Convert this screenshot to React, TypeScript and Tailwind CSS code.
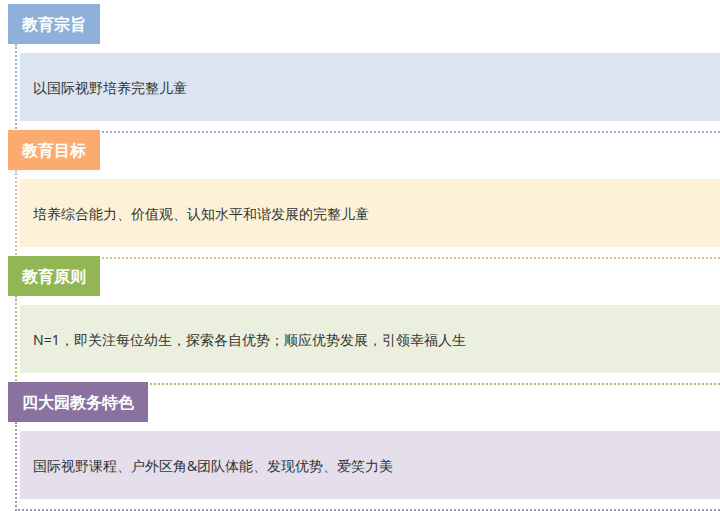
const sections = [
  { title: "教育宗旨", text: "以国际视野培养完整儿童", head: "bg-[#8eb0da]", body: "bg-[#dbe4f0]", line: "border-[#8eb0da]" },
  { title: "教育目标", text: "培养综合能力、价值观、认知水平和谐发展的完整儿童", head: "bg-[#fbab6d]", body: "bg-[#fdf1d7]", line: "border-[#e8b898]" },
  { title: "教育原则", text: "N=1，即关注每位幼生，探索各自优势；顺应优势发展，引领幸福人生", head: "bg-[#93b655]", body: "bg-[#ebf0de]", line: "border-[#a8c47a]" },
  { title: "四大园教务特色", text: "国际视野课程、户外区角&团队体能、发现优势、爱笑力美", head: "bg-[#8a72a0]", body: "bg-[#e5dfeb]", line: "border-[#a595b5]" },
];

export default function App() {
  return (
    <div className="w-[720px] h-[511px] bg-white overflow-hidden pt-[4px] font-['Liberation_Sans','Noto_Sans_CJK_SC',sans-serif]">
      {sections.map((s, i) => (
        <div key={i} className={i > 0 ? "-mt-[3px]" : ""}>
          <div className={`relative z-10 ml-[8px] inline-block h-[40px] px-[14px] leading-[40px] text-[16px] font-bold text-white ${s.head}`}>
            {s.title}
          </div>
          <div className={`ml-[15px] border-l-2 border-b-2 border-dotted ${s.line} pl-[3px] pt-[9px] pb-[10px]`}>
            <div className={`h-[68px] pl-[13px] flex items-center text-[14px] text-[#333] ${s.body}`}>
              {s.text}
            </div>
          </div>
        </div>
      ))}
    </div>
  );
}
